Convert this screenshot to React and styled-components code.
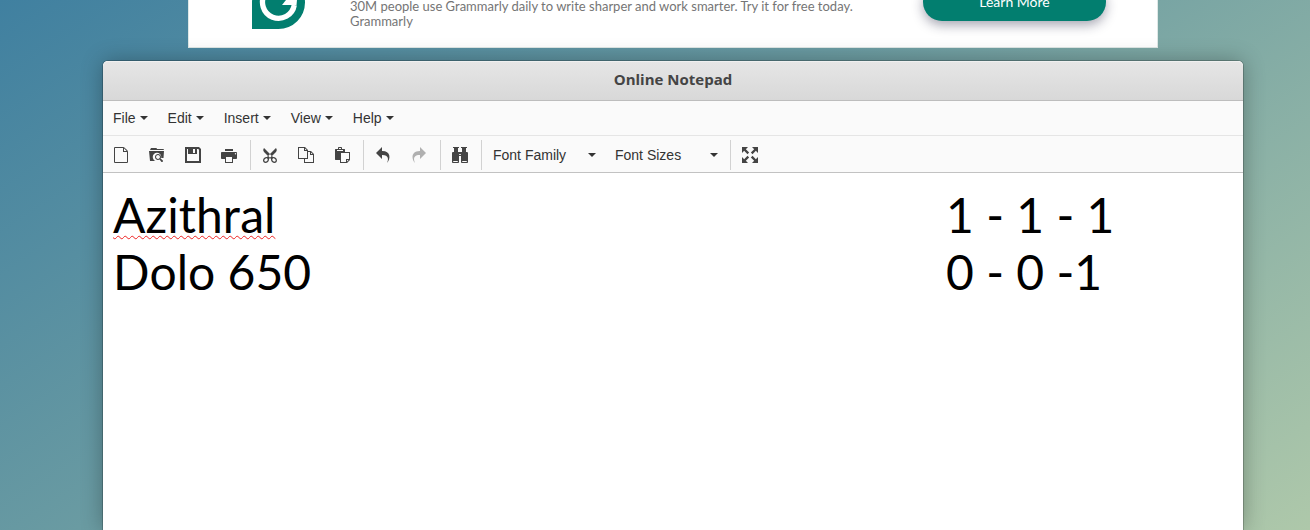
import React from "react";
import styled, { createGlobalStyle } from "styled-components";

const Global = createGlobalStyle`
  *, *::before, *::after { box-sizing: border-box; }
  html, body { margin: 0; height: 100%; }
  body { font-family: "Liberation Sans", Arial, sans-serif; overflow: hidden; }
  #root { height: 100%; }
`;

const Page = styled.div`
  height: 100%;
  display: flex;
  flex-direction: column;
  gap: 13px;
  padding: 0 67px 0 103px;
  overflow: hidden;
  background: linear-gradient(147deg, #4080a0 0%, #6a9ba2 42%, #aec8aa 100%);
`;

const Ad = styled.aside`
  flex: none;
  display: flex;
  align-items: flex-end;
  width: 100%;
  max-width: 970px;
  height: 90px;
  margin: -42px auto 0;
  padding: 0 51px 18px 63px;
  background: #fff;
  border: 1px solid #dfe8e6;
`;

const AdLogo = styled.svg`
  flex: none;
  width: 53px;
  height: 54px;
`;

const AdCopy = styled.div`
  flex: 1;
  padding-left: 45px;
  color: #757575;
  font-family: Lato, sans-serif;
  font-size: 13px;
  line-height: 15px;
`;

const AdButton = styled.button`
  width: 183px;
  height: 38px;
  margin-bottom: 8px;
  padding: 0 0 2px;
  border: 0;
  border-radius: 19px;
  background: #027e6f;
  color: #fff;
  font-family: Lato, sans-serif;
  font-size: 14px;
  box-shadow: 0 4px 12px rgba(30, 30, 60, 0.4);
`;

const Window = styled.main`
  flex: 1;
  display: flex;
  flex-direction: column;
  background: #fff;
  border-radius: 5px 5px 0 0;
  box-shadow: 0 0 0 1px rgba(0, 0, 0, 0.2), 0 0 22px rgba(0, 0, 0, 0.3);
`;

const TitleBar = styled.header`
  height: 40px;
  display: flex;
  align-items: center;
  justify-content: center;
  padding-bottom: 4px;
  border-bottom: 1px solid #bdbdbd;
  border-radius: 5px 5px 0 0;
  background: linear-gradient(#e6e6e6, #d8d8d8);
  box-shadow: inset 0 1px 0 #f0f0f0;
`;

const Title = styled.h1`
  margin: 0;
  color: #444;
  font: 700 15px/20px "Open Sans", sans-serif;
`;

const MenuBar = styled.nav`
  height: 35px;
  display: flex;
  background: #fafafa;
  border-bottom: 1px solid #e5e5e5;
`;

const MenuButton = styled.button`
  display: flex;
  align-items: center;
  gap: 4px;
  padding: 0 10px;
  border: 0;
  background: none;
  color: #333;
  font: 14px/20px "Liberation Sans", Arial, sans-serif;
`;

const CaretShape = styled.svg`
  flex: none;
  width: 8px;
  height: 4px;
  fill: #333;
`;

const Toolbar = styled.div`
  height: 37px;
  display: flex;
  padding: 4px 0 2px;
  background: #fafafa;
  border-bottom: 1px solid #c2c2c2;
`;

const Group = styled.div`
  display: flex;
  padding-right: 3px;
  & + & {
    padding-left: 1px;
    border-left: 1px solid #d2d2d2;
  }
`;

const ToolButton = styled.button`
  display: flex;
  align-items: center;
  justify-content: center;
  width: 36px;
  padding: 0;
  border: 0;
  background: none;
  color: #444;
  opacity: ${(p) => (p.disabled ? 0.4 : 1)};
`;

const Glyph = styled.svg`
  width: 16px;
  height: 16px;
  fill: currentColor;
  overflow: visible;
`;

const ListBox = styled.label`
  display: grid;
  grid-template-columns: 1fr 17px;
  align-items: center;
  width: 122px;
`;

const Select = styled.select`
  grid-area: 1 / 1 / 2 / 3;
  width: 100%;
  height: 30px;
  padding: 0 20px 0 10px;
  border: 0;
  appearance: none;
  background: none;
  color: #333;
  font: 14px/20px "Liberation Sans", Arial, sans-serif;
`;

const ListCaret = styled(CaretShape)`
  grid-area: 1 / 2 / 2 / 3;
  pointer-events: none;
`;

const Editor = styled.div`
  flex: 1;
  padding: 13px 10px;
  color: #000;
  font: 48px/57px Lato, sans-serif;
  font-kerning: none;
  outline: none;
`;

const Line = styled.div`
  display: flex;
  justify-content: space-between;
`;

const Dose = styled.span`
  width: 287px;
  white-space: nowrap;
`;

const Misspelled = styled.span`
  text-decoration: underline wavy #e22 1px;
  text-decoration-skip-ink: none;
  text-underline-offset: 2px;
`;

/* Outlines are on a 1024-unit grid; "up" marks those whose y axis points up from a baseline at 960. */
const icons = {
  newdocument: {
    d: "M903.432 199.43l-142.864-142.862c-31.112-31.112-92.568-56.568-136.568-56.568h-480c-44 0-80 36-80 80v864c0 44 36 80 80 80h736c44 0 80-36 80-80v-608c0-44-25.456-105.458-56.568-136.57zM858.178 244.686c3.13 3.13 6.25 6.974 9.28 11.314h-163.458v-163.456c4.34 3.03 8.184 6.15 11.314 9.28l142.864 142.862zM896 944c0 8.672-7.328 16-16 16h-736c-8.672 0-16-7.328-16-16v-864c0-8.672 7.328-16 16-16h480c4.832 0 10.254 0.61 16 1.704v254.296h254.296c1.094 5.746 1.704 11.168 1.704 16v608z",
  },
  browse: {
    up: true,
    d: "M928 832h-416l-32 64h-352l-64-128h896zM840.34 256h87.66l32 448h-960l64-640h356.08c-104.882 37.776-180.08 138.266-180.08 256 0 149.982 122.018 272 272 272 149.98 0 272-122.018 272-272 0-21.678-2.622-43.15-7.66-64zM874.996 110.25l-134.496 110.692c17.454 28.922 27.5 62.814 27.5 99.058 0 106.04-85.96 192-192 192s-192-85.96-192-192 85.96-192 192-192c36.244 0 70.138 10.046 99.058 27.5l110.692-134.496c22.962-26.678 62.118-28.14 87.006-3.252l5.492 5.492c24.888 24.888 23.426 64.044-3.252 87.006zM576 196c-68.484 0-124 55.516-124 124s55.516 124 124 124 124-55.516 124-124-55.516-124-124-124z",
  },
  save: {
    d: "M896 0h-896v1024h1024v-896l-128-128zM512 128h128v256h-128v-256zM896 896h-768v-768h64v320h576v-320h74.978l53.022 53.018v714.982z",
  },
  print: {
    up: true,
    d: "M256 832h512v-128h-512v128zM960 640h-896c-35.2 0-64-28.8-64-64v-320c0-35.2 28.796-64 64-64h192v-256h512v256h192c35.2 0 64 28.8 64 64v320c0 35.2-28.8 64-64 64zM704 0h-384v320h384v-320zM974.4 528c0-25.626-20.774-46.4-46.398-46.4-25.626 0-46.402 20.774-46.402 46.4s20.776 46.4 46.402 46.4c25.626 0 46.398-20.774 46.398-46.4z",
  },
  cut: {
    up: true,
    d: "M890.774 250.846c-45.654 45.556-103.728 69.072-157.946 69.072h-29.112l-63.904 64.008 255.62 256.038c63.904 64.01 63.904 192.028 0 256.038l-383.43-384.056-383.432 384.054c-63.904-64.008-63.904-192.028 0-256.038l255.622-256.034-63.906-64.008h-29.114c-54.22 0-112.292-23.518-157.948-69.076-81.622-81.442-92.65-202.484-24.63-270.35 29.97-29.902 70.288-44.494 112.996-44.494 54.216 0 112.29 23.514 157.946 69.072 53.584 53.464 76.742 124 67.084 185.348l65.384 65.488 65.376-65.488c-9.656-61.348 13.506-131.882 67.084-185.348 45.662-45.558 103.732-69.072 157.948-69.072 42.708 0 83.024 14.592 112.994 44.496 68.02 67.866 56.988 188.908-24.632 270.35zM353.024 114.462c-7.698-17.882-19.01-34.346-33.626-48.926-14.636-14.604-31.172-25.918-49.148-33.624-16.132-6.916-32.96-10.568-48.662-10.568-15.146 0-36.612 3.402-52.862 19.612-16.136 16.104-19.52 37.318-19.52 52.288 0 15.542 3.642 32.21 10.526 48.212 7.7 17.884 19.014 34.346 33.626 48.926 14.634 14.606 31.172 25.914 49.15 33.624 16.134 6.914 32.96 10.568 48.664 10.568 15.146 0 36.612-3.4 52.858-19.614 16.134-16.098 19.522-37.316 19.522-52.284 0.002-15.542-3.638-32.216-10.528-48.214zM512.004 293.404c-49.914 0-90.376 40.532-90.376 90.526 0 49.992 40.462 90.52 90.376 90.52s90.372-40.528 90.372-90.52c0-49.998-40.46-90.526-90.372-90.526zM855.272 40.958c-16.248-16.208-37.712-19.612-52.86-19.612-15.704 0-32.53 3.652-48.666 10.568-17.972 7.706-34.508 19.02-49.142 33.624-14.614 14.58-25.926 31.042-33.626 48.926-6.886 15.998-10.526 32.672-10.526 48.212 0 14.966 3.384 36.188 19.52 52.286 16.246 16.208 37.712 19.614 52.86 19.614 15.7 0 32.53-3.654 48.66-10.568 17.978-7.708 34.516-19.018 49.15-33.624 14.61-14.58 25.924-31.042 33.626-48.926 6.884-15.998 10.526-32.67 10.526-48.212-0.002-14.97-3.39-36.186-19.522-52.288z",
  },
  copy: {
    up: true,
    d: "M832 704h-192v64l-192 192h-448v-768h384v-256h640v576l-192 192zM832 613.49l101.49-101.49h-101.49v101.49zM448 869.49l101.49-101.49h-101.49v101.49zM64 896h320v-192h192v-448h-512v640zM960 0h-512v192h192v448h128v-192h192v-448z",
  },
  paste: {
    up: true,
    d: "M704 640v160c0 17.6-14.4 32-32 32h-160v64c0 35.2-28.8 64-64 64h-128c-35.204 0-64-28.8-64-64v-64h-160c-17.602 0-32-14.4-32-32v-640c0-17.6 14.398-32 32-32h288v-192h448l192 192v512h-320zM320 895.91c0.028 0.034 0.058 0.06 0.086 0.09h127.828c0.028-0.03 0.058-0.056 0.086-0.09v-63.91h-128v63.91zM192 704v64h384v-64h-384zM832 26.51v101.49h101.49l-101.49-101.49zM960 192h-192v-192h-320v576h512v-384z",
  },
  undo: {
    d: "M761.862 1024c113.726-206.032 132.888-520.306-313.862-509.824v253.824l-384-384 384-384v248.372c534.962-13.942 594.57 472.214 313.862 775.628z",
  },
  redo: {
    d: "M576 248.372v-248.372l384 384-384 384v-253.824c-446.75-10.482-427.588 303.792-313.86 509.824-280.712-303.414-221.1-789.57 313.86-775.628z",
  },
  find: {
    d: "M64 0h384v64h-384zM576 0h384v64h-384zM952 320h-56v-256h-256v256h-256v-256h-256v256h-56c-39.6 0-72 32.4-72 72v560c0 39.6 32.4 72 72 72h304c39.6 0 72-32.4 72-72v-376h128v376c0 39.6 32.4 72 72 72h304c39.6 0 72-32.4 72-72v-560c0-39.6-32.4-72-72-72zM348 960h-248c-19.8 0-36-14.4-36-32s16.2-32 36-32h248c19.8 0 36 14.4 36 32s-16.2 32-36 32zM544 512h-64c-17.6 0-32-14.4-32-32s14.4-32 32-32h64c17.6 0 32 14.4 32 32s-14.4 32-32 32zM924 960h-248c-19.8 0-36-14.4-36-32s16.2-32 36-32h248c19.8 0 36 14.4 36 32s-16.2 32-36 32z",
  },
  fullscreen: {
    d: "M1024 0v384l-138.26-138.26-212 212-107.48-107.48 212-212-138.26-138.26zM245.74 138.26l212 212-107.48 107.48-212-212-138.26 138.26v-384h384zM885.74 778.26l138.26-138.26v384h-384l138.26-138.26-212-212 107.48-107.48zM457.74 673.74l-212 212 138.26 138.26h-384v-384l138.26 138.26 212-212z",
  },
};

function Tool({ icon, label, disabled }) {
  const { d, up } = icons[icon];
  return (
    <ToolButton type="button" aria-label={label} disabled={disabled}>
      <Glyph viewBox="0 0 1024 1024" aria-hidden="true">
        <path d={d} fillRule="evenodd" transform={up ? "matrix(1 0 0 -1 0 960)" : undefined} />
      </Glyph>
    </ToolButton>
  );
}

function Picker({ label }) {
  return (
    <ListBox>
      <Select aria-label={label} defaultValue="">
        <option value="">{label}</option>
      </Select>
      <ListCaret viewBox="0 0 8 4" aria-hidden="true">
        <path d="M0 0h8L4 4z" />
      </ListCaret>
    </ListBox>
  );
}

export default function App() {
  return (
    <>
      <Global />
      <Page>
        <Ad>
          <AdLogo viewBox="0 0 53 54" aria-hidden="true">
            <path d="M0 54V27.500a26.500 26.500 0 1 1 26.500 26.500z" fill="#027e6f" />
            <path
              d="M38 16.200A16 16 0 1 0 42.300 30"
              fill="none"
              stroke="#fff"
              strokeWidth="5.300"
            />
            <path d="M34 25h11l-0.500 5H30z" fill="#fff" />
          </AdLogo>
          <AdCopy>
            30M people use Grammarly daily to write sharper and work smarter. Try it for free today.
            <br />
            Grammarly
          </AdCopy>
          <AdButton type="button">Learn More</AdButton>
        </Ad>
        <Window>
          <TitleBar>
            <Title>Online Notepad</Title>
          </TitleBar>
          <MenuBar>
            {["File", "Edit", "Insert", "View", "Help"].map((name) => (
              <MenuButton type="button" key={name}>
                {name}
                <CaretShape viewBox="0 0 8 4" aria-hidden="true">
                  <path d="M0 0h8L4 4z" />
                </CaretShape>
              </MenuButton>
            ))}
          </MenuBar>
          <Toolbar role="toolbar">
            <Group>
              <Tool icon="newdocument" label="New document" />
              <Tool icon="browse" label="Open" />
              <Tool icon="save" label="Save" />
              <Tool icon="print" label="Print" />
            </Group>
            <Group>
              <Tool icon="cut" label="Cut" />
              <Tool icon="copy" label="Copy" />
              <Tool icon="paste" label="Paste" />
            </Group>
            <Group>
              <Tool icon="undo" label="Undo" />
              <Tool icon="redo" label="Redo" disabled />
            </Group>
            <Group>
              <Tool icon="find" label="Find and replace" />
            </Group>
            <Group>
              <Picker label="Font Family" />
              <Picker label="Font Sizes" />
            </Group>
            <Group>
              <Tool icon="fullscreen" label="Fullscreen" />
            </Group>
          </Toolbar>
          <Editor contentEditable suppressContentEditableWarning spellCheck={false}>
            <Line>
              <Misspelled>Azithral</Misspelled>
              <Dose>1 - 1 - 1</Dose>
            </Line>
            <Line>
              <span>Dolo 650</span>
              <Dose>0 - 0 -1</Dose>
            </Line>
          </Editor>
        </Window>
      </Page>
    </>
  );
}
